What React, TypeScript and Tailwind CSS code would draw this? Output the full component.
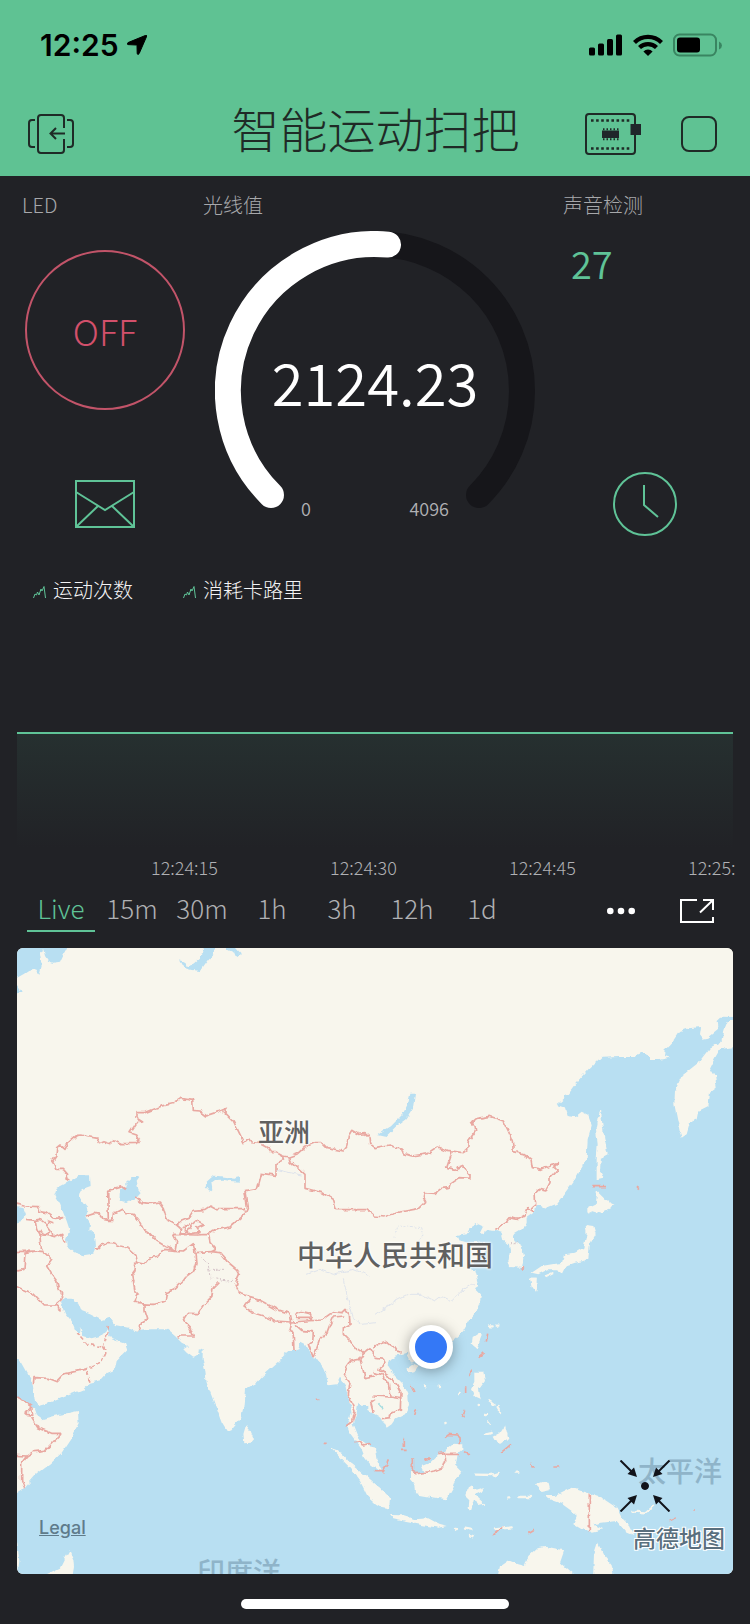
import React from 'react'

interface PlaceLabel {
  text: string
  className: string
}

const GREEN = '#5fc397'

const ranges = ['Live', '15m', '30m', '1h', '3h', '12h', '1d']
const times = ['12:24:15', '12:24:30', '12:24:45', '12:25:']
const series = ['运动次数', '消耗卡路里']

const places: PlaceLabel[] = [
  { text: '亚洲', className: 'left-[241px] top-[169px] text-[26px] font-medium text-[#606060] [text-shadow:0_0_3px_#fff,0_0_3px_#fff]' },
  { text: '中华人民共和国', className: 'left-[280px] top-[292px] text-[28px] font-medium text-[#606060] [text-shadow:0_0_3px_#fff,0_0_3px_#fff]' },
  { text: '太平洋', className: 'left-[621px] top-[508px] text-[28px] font-medium text-[#8fb4c9]' },
  { text: '印度洋', className: 'left-[180px] top-[609px] text-[28px] font-medium text-[#8fb4c9]' }
]

const StatusBar: React.FC = () => (
  <div className="flex h-[90px] items-center justify-between pl-10 pr-[27px]">
    <div className="flex items-center gap-2 font-['Inter',sans-serif] text-[30px] font-semibold leading-8 text-black">
      <span>12:25</span>
      <svg width="20" height="20" viewBox="0 0 20 20" aria-hidden="true">
        <path d="M19.600.4Q20 0 19.800 1L12.200 18.500Q11 20.500 10.200 18.800L10 10.600Q10 10 9.400 10L1 9.600Q-.8 9 1 7.600L18.800.3Z" stroke="#000" />
      </svg>
    </div>
    <div className="flex items-center gap-[10px]">
      <svg width="34" height="22" viewBox="0 0 34 22" aria-hidden="true">
        <rect x="0" y="13.500" width="6" height="8" rx="1.500" />
        <rect x="9" y="9.500" width="6" height="12" rx="1.500" />
        <rect x="18" y="5" width="6" height="16.500" rx="1.500" />
        <rect x="27" y="0.500" width="6" height="21" rx="1.500" />
      </svg>
      <svg width="30" height="22" viewBox="0 0 30 22" fill="none" stroke="#000" strokeWidth="4.200" aria-hidden="true">
        <path d="M1.500 8.500a19.200 19.200 0 0 1 27 0" />
        <path d="M6.500 13.600a12 12 0 0 1 17 0" />
        <path d="M15 22l-4.600-4.600a6.500 6.500 0 0 1 9.200 0z" fill="#000" stroke="none" />
      </svg>
      <svg width="50" height="24" viewBox="0 0 50 24" aria-hidden="true">
        <rect x="1" y="1.500" width="42" height="21" rx="5.500" fill="none" stroke="#398561" strokeWidth="2" />
        <rect x="4" y="4.500" width="23" height="15" rx="3" />
        <path d="M46 8.500q3 1.500 3 4t-3 4z" fill="#398561" />
      </svg>
    </div>
  </div>
)

const NavBar: React.FC = () => (
  <div className="flex h-[86px] items-center justify-between pl-7 pr-[33px] pt-[2px]">
    <button type="button" aria-label="返回" className="w-[138px]">
      <svg width="46" height="40" viewBox="0 0 46 40" fill="none" stroke="#1f2a26" strokeWidth="2">
        <path d="M36 14V4q0-3-3-3H13q-3 0-3 3v32q0 3 3 3h20q3 0 3-3V25" />
        <path d="M7 6H4Q1 6 1 9v21q0 3 3 3h3M39 6h3q3 0 3 3v21q0 3-3 3h-3" />
        <path d="M37 19.500H23M28 14l-5.500 5.500L28 25" />
      </svg>
    </button>
    <h1 className="pb-[14px] text-[48px] font-light leading-[56px] text-[#1f2a26]">智能运动扫把</h1>
    <div className="flex w-[132px] items-center justify-between">
      <button type="button" aria-label="设备">
        <svg width="56" height="42" viewBox="0 0 56 42" fill="#20262a">
          <rect x="1" y="1" width="49" height="40" rx="3" fill="none" stroke="#1f2a26" strokeWidth="2" />
          <path d="M6 7.500h40M6 35.500h40" stroke="#1f2a26" strokeWidth="2.500" strokeDasharray="2.600 2.500" />
          <rect x="17" y="17.500" width="17" height="7.500" />
          <path d="M18 16.200h16M18 26.200h16" stroke="#1f2a26" strokeWidth="2" strokeDasharray="1.500 2" />
          <rect x="45.500" y="11" width="10.500" height="11" />
        </svg>
      </button>
      <button type="button" aria-label="停止" className="size-9 rounded-lg border-2 border-[#1f2a26]" />
    </div>
  </div>
)

const Gauge: React.FC = () => (
  <div className="relative mx-auto mt-3 w-80">
    <svg className="w-full" viewBox="0 0 320 288" fill="none" strokeWidth="26" strokeLinecap="round" aria-hidden="true">
      <path d="M56 264A147 147 0 1 1 264 264" stroke="#16161a" />
      <path d="M56 264A147 147 0 0 1 173 13.600" stroke="#fff" />
    </svg>
    <div className="absolute inset-x-0 top-[114px] text-center text-[58px] [font-weight:350] leading-[72px] text-white">2124.23</div>
    <div className="absolute inset-x-[86px] bottom-[1px] flex justify-between text-[18px] [font-weight:350] leading-5 text-[#b0b1b4]">
      <span>0</span>
      <span>4096</span>
    </div>
  </div>
)

const Widgets: React.FC = () => (
  <section className="grid grid-cols-4 pt-[15px]">
    <div className="flex flex-col">
      <h2 className="pl-[5px] text-[20px] font-light leading-7 text-[#a7a8ab]">LED</h2>
      <button
        type="button"
        className="ml-2 mt-[31px] size-40 rounded-full border-2 border-[#c25469] text-[36px] font-light leading-10 text-[#d3506b]"
      >
        OFF
      </button>
      <button type="button" aria-label="邮件" className="ml-[58px] mt-[70px] w-[60px]">
        <svg width="60" height="48" viewBox="0 0 60 48" fill="none" stroke={GREEN} strokeWidth="2">
          <rect x="1" y="1" width="58" height="46" />
          <path d="M1 12l29 18 29-18M1 47l22-21M59 47L37 26" />
        </svg>
      </button>
    </div>
    <div className="col-span-2">
      <h2 className="pl-[7px] text-[20px] font-light leading-7 text-[#a7a8ab]">光线值</h2>
      <Gauge />
    </div>
    <div className="flex flex-col justify-between">
      <div className="pl-[9px]">
        <h2 className="text-[20px] font-light leading-7 text-[#a7a8ab]">声音检测</h2>
        <p className="pl-2 pt-[18px] text-[38px] [font-weight:350] leading-[52px] text-[#5fc397]">27</p>
      </div>
      <button type="button" aria-label="时间" className="-mb-2 ml-[59px] w-16">
        <svg width="64" height="64" viewBox="0 0 64 64" fill="none" stroke={GREEN} strokeWidth="2">
          <circle cx="32" cy="32" r="31" />
          <path d="M31 13v20l14 12" />
        </svg>
      </button>
    </div>
  </section>
)

const Chart: React.FC = () => (
  <section>
    <ul className="flex gap-[50px] pl-4 pt-12 text-[20px] font-light leading-7 text-[#f4f4f5]">
      {series.map((name) => (
        <li key={name} className="flex items-center gap-[7px]">
          <svg className="mt-1" width="13" height="13" viewBox="0 0 13 13" fill="none" stroke={GREEN} aria-hidden="true">
            <path d="M.5 12l1.500-4 1.500 1 1-3 1.500 3L8 3l1 2 2-4.500L12.500 12" />
          </svg>
          {name}
        </li>
      ))}
    </ul>
    <div className="mt-32 h-[116px] border-t-2 border-[#5fc397] bg-linear-to-b from-[#263030] to-[#212226]" />
    <div className="mt-[7px] grid grid-cols-4 text-[18px] font-light leading-6 text-[#b0b1b4]">
      {times.map((time) => (
        <span key={time} className="w-0 whitespace-nowrap pl-[134px]">{time}</span>
      ))}
    </div>
    <div className="mt-[11px] flex items-center pl-[10px] pr-[19px]">
      {ranges.map((range) => (
        <button
          key={range}
          type="button"
          className={
            range === 'Live'
              ? 'mr-[2px] w-[68px] border-b-2 border-[#5fc397] pb-1 text-[26px] font-light leading-9 text-[#5fc397]'
              : 'w-[70px] border-b-2 border-transparent pb-1 text-[26px] font-light leading-9 text-[#b0b1b4]'
          }
        >
          {range}
        </button>
      ))}
      <button type="button" aria-label="更多" className="ml-auto">
        <svg width="28" height="24" viewBox="0 0 28 24" fill="#fff">
          <circle cx="3.300" cy="12" r="3.300" />
          <circle cx="14" cy="12" r="3.300" />
          <circle cx="24.700" cy="12" r="3.300" />
        </svg>
      </button>
      <button type="button" aria-label="全屏" className="ml-[45px]">
        <svg width="34" height="24" viewBox="0 0 34 24" fill="none" stroke="#fff" strokeWidth="2">
          <path d="M17 1H1v22h32v-5M23 1h10v10M33 1L20 13.500" />
        </svg>
      </button>
    </div>
  </section>
)

// Four quadrants, each drawn from its own top left corner
const MapDrawing: React.FC = () => (
  <svg className="block w-full bg-[#f8f6ed]" viewBox="51 21 2148 1878" aria-hidden="true">
    <defs>
      <filter id="coast" x="0" y="0" width="2250" height="1950" filterUnits="userSpaceOnUse" colorInterpolationFilters="sRGB">
        <feTurbulence type="fractalNoise" baseFrequency="0.05" numOctaves="2" seed="4" />
        <feDisplacementMap in="SourceGraphic" scale="15" xChannelSelector="R" yChannelSelector="G" />
      </filter>
    </defs>
    <g filter="url(#coast)">
      {/* 陆地与海洋 */}
      <rect x="0" y="0" width="2250" height="1950" fill="#f8f6ed" />
      <rect x="0" y="1028" width="2250" height="920" fill="#b8dff2" />
      <g fill="#b8dff2">
        <path d="M30 0H210L200 25 188 45 180 62 160 65 145 60 135 45 130 25 120 40 125 75 118 102 105 85 85 90 70 100 51 110 30 110ZM30 130L51 135 62 152 30 158Z" />
        <path d="M605 0H650L645 25 640 40 625 55 610 75 600 90 575 87 550 80 537 58 555 62 560 75 580 68 600 50 610 35ZM675 0L705 21 722 40 718 46 700 35 675 24Z" />
        <path d="M205 720L240 703 270 703 272 735 245 745 237 760 248 785 265 805 258 825 270 845 268 865 285 880 288 920 280 938 250 943 225 935 200 915 198 895 210 870 200 840 190 815 180 790 163 762 170 740 190 730Z" />
        <path d="M360 745L380 738 375 725 395 708 420 708 410 722 415 745 423 755 405 775 375 783 358 778Z" />
        <path d="M720 706L720 722 690 720 670 716 645 717 634 725 637 745 628 752 617 738 620 722 640 704 665 706 700 710Z" />
        <path d="M30 797L70 800 78 820 65 840 30 850Z" />
      </g>
      <g transform="translate(1125 0)">
        <path fill="#b8dff2" d="M106 458L120 458 114 500 92 535 62 557 32 587 8 582 23 571 48 556 83 520 98 490Z" />
        <path
          fill="#b8dff2"
          d="M1110 232L1035 230 1025 240 1028 268 1000 290 985 293 975 280 978 258 940 262 915 270 895 300 872 325 870 345 885 350 850 357 825 357 825 345 800 335 780 345 735 345 680 347 640 385 600 430 570 470 545 492 570 500 578 525 600 528 620 512 640 522 650 550 645 570 638 595 635 655 600 715 570 755 545 788 515 800 485 792 480 812 455 830 455 850 435 870 415 882 418 900 440 915 448 950 440 980 405 978 400 960 405 930 402 910 385 895 380 875 362 870 340 868 325 880 318 875 328 855 310 847 290 858 275 880 245 885 250 897 280 905 330 900 335 930 300 960 285 975 300 1010 310 1040 1110 1040Z"
        />
        <g fill="#f8f6ed">
          <path d="M1110 315L1062 320 1035 325 1020 350 1005 380 1020 405 1025 440 1005 455 1000 495 970 510 965 535 945 545 935 580 920 590 915 575 908 540 898 490 900 450 920 405 970 365 1005 320 1040 300 1045 265 1055 240 1110 240Z" />
          <path d="M678 505L680 530 688 590 698 640 678 650 675 690 685 710 665 715 665 650 668 610 662 560 668 530Z" />
          <path d="M665 750L690 775 718 788 705 805 680 815 655 808 640 815 640 800 662 790 665 770ZM632 852L655 855 662 880 645 910 640 950 625 960 600 965 572 975 560 1000 550 985 520 985 490 1000 470 995 500 975 540 968 565 965 570 940 600 935 625 920 635 880ZM505 1005L535 992 535 1000 510 1012ZM465 1010L488 1010 488 1022 480 1050 470 1030Z" />
        </g>
      </g>
      <g transform="translate(0 1020)">
        <g fill="#f8f6ed">
          <path d="M30-30H1150V420L1130 400 1115 378 1100 372 1085 372 1075 362 1070 395 1062 420 1058 430 1070 460 1090 485 1105 495 1128 500 1132 535 1147 575 1130 565 1110 550 1095 530 1085 505 1060 470 1045 450 1045 425 1055 400 1050 365 1042 340 1035 310 1020 290 1010 310 985 313 978 280 970 260 955 238 940 235 930 215 920 195 900 185 895 205 880 210 868 210 850 225 840 240 800 275 770 305 735 325 730 380 722 415 700 440 690 452 680 450 665 425 650 385 635 345 620 305 615 265 608 235 608 208 600 205 598 220 580 230 560 215 550 205 565 195 545 185 525 165 500 145 450 145 415 150 385 140 345 132 330 110 305 118 270 100 245 90 235 65 215 50 195 50 183 65 195 95 215 120 225 145 235 160 240 138 250 165 275 172 300 165 320 145 325 160 335 175 375 188 382 208 350 240 345 265 320 275 300 298 270 305 250 325 200 345 150 365 115 375 105 360 98 310 80 275 62 243 30 225Z" />
          <path d="M30 330L80 365 105 385 112 405 125 415 160 405 234 390 236 430 215 470 185 515 150 550 110 580 75 620 30 650Z" />
          <path d="M135 910V882L180 860 195 830 208 808 220 835 222 858 213 910ZM30 780L52 785 58 840 53 880 30 890Z" />
          <path d="M738 432L752 450 762 475 750 488 733 490 730 460ZM990 500L1025 512 1045 540 1075 565 1110 595 1140 620 1170 650 1167 685 1145 680 1125 668 1105 650 1080 600 1050 560 1010 520Z" />
        </g>
      </g>
      <g transform="translate(1125 1020)">
        <g fill="#f8f6ed">
          <path d="M-20-30H298L310 15 300 22 318 40 315 65 305 90 285 115 265 150 240 175 200 205 150 225 120 240 110 245 95 215 60 225 45 240 40 255 60 285 85 310 100 340 102 375 90 400 60 415 50 430 35 440 20 410 -20 390Z" />
          <path d="M105 570L120 578 150 575 140 555 165 545 190 520 215 505 235 488 262 490 262 505 245 520 240 550 262 572 245 590 235 620 215 655 180 650 150 645 120 640 118 610 105 595Z" />
          <path d="M45 702L80 703 120 715 160 712 190 728 215 735 190 740 140 732 90 722 55 715ZM280 618L290 612 300 628 330 618 320 632 300 642 328 668 312 672 298 652 288 687 278 682 280 655 270 645Z" />
          <path d="M480 610L500 603 520 605 525 625 500 630ZM505 645L540 645 570 630 590 620 625 632 680 650 725 680 740 710 765 735 778 762 750 750 725 720 680 725 655 730 685 745 650 752 620 745 595 730 605 705 590 690 560 668 530 658Z" />
          <path d="M360 920L375 855 400 838 430 850 450 855 460 825 485 802 515 797 568 808 555 845 600 885V920ZM653 920L657 820 668 785 685 820 710 850 722 920Z" />
          <path d="M293 168L317 152 320 165 305 202 290 190ZM298 275L325 275 330 300 312 325 317 355 300 347 288 325 298 305ZM353 467L375 455 390 432 400 470 390 480 375 492 360 480ZM93 264L115 248 133 255 118 274 100 277Z" />
          <path d="M465-10L488-10 480 28 470 15Z" />
        </g>
        <g fill="none" stroke="#f8f6ed" strokeWidth="7" strokeLinecap="round">
          <path d="M303 581L350 582 368 576M775 692L808 694 832 674M345 136h8M365 134h5M152 316h1M194 318h1M250 336h1M211 426h1M308 372h1M340 358l15 12M368 378l10 18M330 402h3M340 420l6 8M400 652h3M430 648h38M240 744h3M270 740l16 3M285 762l10 4M330 460l20-4M360 745l50-6M425 575h5" />
        </g>
        <path d="M10 367l14 14" stroke="#a8dde0" strokeWidth="6" />
      </g>

      {/* 国界 */}
      <g fill="none" stroke="#e9a8a1" strokeWidth="5" strokeLinejoin="round">
        <path d="M205 718L195 712 203 700 190 685 172 685 165 670 158 660 168 645 170 620 180 612 195 625 205 605 230 583 245 582 262 587 290 592 298 608 312 602 330 608 345 597 365 608 410 607 418 595 410 582 390 575 400 560 410 545 428 543 408 530 408 515 435 515 480 497 520 487 543 472 578 478 580 508 600 510 620 525 630 520 655 512 680 502 672 512 700 540 710 560 732 605 745 592 755 605 775 607 790 612 805 620 815 635 830 635 848 645 850 655 828 670 828 703 785 697 772 745 735 752 742 800 735 815" />
        <path d="M848 645L866 648 890 640 915 618 945 605 965 605 980 620 1030 630 1040 618 1045 585 1055 568 1075 580 1095 578 1110 590 1112 610 1125 620 1165 612 1205 625 1210 637 1235 645 1285 638 1315 618 1340 628 1357 630 1340 680 1365 685 1387 676 1410 700 1410 712 1380 710 1350 730 1347 740 1325 742 1305 757 1273 755 1270 770 1277 782 1255 803 1200 813 1150 828 1125 825 1100 806 1010 806 1000 775 965 755 915 742 915 700 895 682 870 660 866 648" />
        <path d="M1357 630L1387 635 1403 625 1405 600 1427 570 1425 555 1415 545 1430 532 1470 526 1510 540 1525 570 1537 600 1540 632 1570 638 1593 655 1597 680 1625 685 1655 670 1675 665 1660 680 1670 688 1650 710 1650 725 1637 750 1617 745 1605 757 1607 790 1595 800 1600 812 1583 800 1575 822 1553 835 1530 830 1520 842 1500 855 1487 868" />
        <path d="M260 825L285 817 300 820 310 835 325 838 323 748 350 742 368 737 380 746M325 838L338 838 340 818 365 805 380 818 400 820 420 845 430 865 450 878 470 900 500 918 525 928M405 768L425 785 450 787 478 783 490 800 500 835 530 852 545 840 565 832 580 808 615 805 630 795 645 803 735 803" />
        <path d="M530 852L545 865 540 880 560 875 575 850 590 838 612 850 590 860 600 875 565 878 550 860 570 845M625 880L640 868 690 858 735 820M625 880L590 882 520 880 530 900 525 928 550 930 580 908 585 935 635 932 648 925 630 905 625 880" />
        <path d="M288 928L310 908 340 908 360 915 380 918 405 940 410 965 435 970 450 950 475 945 490 925 525 928M407 965L405 990 398 1000 402 1022M585 935L588 965 580 990 560 1005 548 1022M635 932L660 935 680 960 710 985 718 1000 708 1022" />
        <path d="M30 785L75 795 115 797 120 812 140 815 165 832 190 830M78 835L105 838 120 835 140 850 145 840 160 845M105 838L110 862 120 880 150 885 160 890 155 870 140 850M118 870L140 880 150 872M160 890L185 880 195 905M120 880L122 915 130 932 110 930 30 932M130 932L155 955 140 975 155 1000 172 1022M110 930L75 938 72 985 40 993" />
        <path d="M1777 737h41M1908 735l9 8M1562 985l10-9" />
        <g transform="translate(0 1020)">
          <path d="M40 12L100 40 130 72 165 72 185 55 188 45 175 20 170 0M165 72L185 88M400 0L405 30 415 40 405 60 435 75 435 90 443 115 425 125 415 150M410 68L460 70 495 62 500 35 525 22 548 0M533 172L540 165 580 165 570 140 550 120 565 97 595 98 610 75 635 50 640 20 655 5" />
          <path d="M710 0L705 15 715 35 745 45 750 55 732 78 760 95 790 105 825 120 875 123 965 117 1000 92 1025 95 1035 85 1048 100 1050 130 1030 140 1030 160 1050 180 1070 205 1088 218 1078 235 1050 240 1035 262 1030 280 1050 305 1045 340 1065 390 1058 420 1038 435M750 50L780 58 830 85 870 98 875 123M885 98L890 112 935 112 930 98 905 92 885 98" />
          <path d="M875 123L870 145 880 160 882 210M885 130L905 148 940 152 938 180 925 190 940 230 950 200 960 170 975 170 990 130 1000 108 1030 105M1088 218L1110 200 1125 225M1080 235L1090 270 1095 290 1125 285M1125 355L1112 365 1120 395M1062 485L1080 482 1090 495 1110 490M950 355h9M974 487h9" />
          <path d="M255 265L195 278 172 302 145 292 102 290 100 308M30 330L95 378 98 403 78 400 80 388 98 382M95 408L115 440 155 457 185 457 135 508 100 512 80 525 40 523M80 525L65 545 65 600 73 622" />
          <path strokeDasharray="12 7" d="M232 155L262 190 310 198 318 215 305 245 255 265 270 302M325 135L320 165 310 198" />
        </g>
        <g transform="translate(1125 1020)">
          <path d="M-5 202L15 190 38 182 55 195 65 210 80 213M-5 228L25 232 30 250 12 265 40 285 65 310 78 335 76 385 50 395 45 410 22 413M-5 275L20 280 40 310 45 345 76 350M-5 345L45 348M-5 572L25 572 40 535" />
          <path d="M112 535L112 570 125 578 180 570 205 560 212 540 208 515 190 518M212 520H252M210 470L222 460 245 462 255 470 256 490M270 512L285 518M148 540L165 530" />
          <path d="M338 158L334 182M308 230L326 215M281 282L291 263M272 316V336M272 386L262 408M108 315L117 333M125 385L119 402M88 470V498M78 508H95M378 515L408 490M468 545V558L482 557M535 558H553M460 755L478 745M887 718L905 710M952 687h6M355 762L370 750 385 740M643 640V752" />
        </g>
      </g>
      <g fill="none" stroke="#dfe4ec" strokeWidth="3">
        <path d="M1125 1120L1185 1080 1225 1060 1265 1060 1305 1080 1325 1065 1355 1080 1385 1050 1415 1030 1425 1035M1030 1015L1045 1080 1060 1130 1085 1150 1125 1145M830 685L870 695 905 702M918 1000L960 985 1000 1000 1060 985 1110 1005" />
        <path strokeDasharray="6 5" d="M1185 890L1195 852 1265 860 1270 880 1255 900" />
        <path stroke="#d5c3c8" strokeDasharray="6 5" d="M605 950L625 970 630 1010 680 1020 700 1018M625 985H675M1530 905H1555" />
      </g>
    </g>
  </svg>
)

const LocationMap: React.FC = () => (
  <section className="relative mt-4 overflow-hidden rounded-md">
    <MapDrawing />
    {places.map((place) => (
      <span key={place.text} className={`absolute whitespace-nowrap leading-7 ${place.className}`}>
        {place.text}
      </span>
    ))}
    <div className="absolute left-[392px] top-[377px] size-11 rounded-full border-[6px] border-white bg-[#3478f6] shadow-[0_2px_14px_rgba(0,0,0,0.35)]" />
    <a
      href="#legal"
      className="absolute bottom-[34px] left-[22px] font-['Inter',sans-serif] text-[18px] font-medium leading-6 text-[#5f7b8b] underline"
    >
      Legal
    </a>
    <span className="absolute bottom-[23px] right-2 text-[23px] font-medium leading-7 text-[#5a6f7e] [text-shadow:1px_1px_0_#fff,-1px_-1px_0_#fff,1px_-1px_0_#fff,-1px_1px_0_#fff]">
      高德地图
    </span>
    <button type="button" aria-label="定位" className="absolute bottom-[62px] right-[62px]">
      <svg width="52" height="52" viewBox="0 0 52 52" fill="#11131a" stroke="#11131a">
        <circle cx="26" cy="26" r="3.500" />
        <g id="arrow">
          <path d="M1.500.5L13 12" strokeWidth="2" />
          <path d="M18 17L8.500 14 15 7.500Z" stroke="none" />
        </g>
        <use href="#arrow" transform="matrix(-1 0 0 1 52 0)" />
        <use href="#arrow" transform="matrix(1 0 0 -1 0 52)" />
        <use href="#arrow" transform="matrix(-1 0 0 -1 52 52)" />
      </svg>
    </button>
  </section>
)

export default function App() {
  return (
    <div className="min-h-screen bg-[#212226] font-['Noto_Sans_CJK_SC',sans-serif]">
      <header className="bg-[#5fc293]">
        <StatusBar />
        <NavBar />
      </header>
      <main className="px-[17px]">
        <Widgets />
        <Chart />
        <LocationMap />
      </main>
      <div className="mx-auto mt-[25px] h-[10px] w-[268px] rounded-full bg-white" />
    </div>
  )
}
